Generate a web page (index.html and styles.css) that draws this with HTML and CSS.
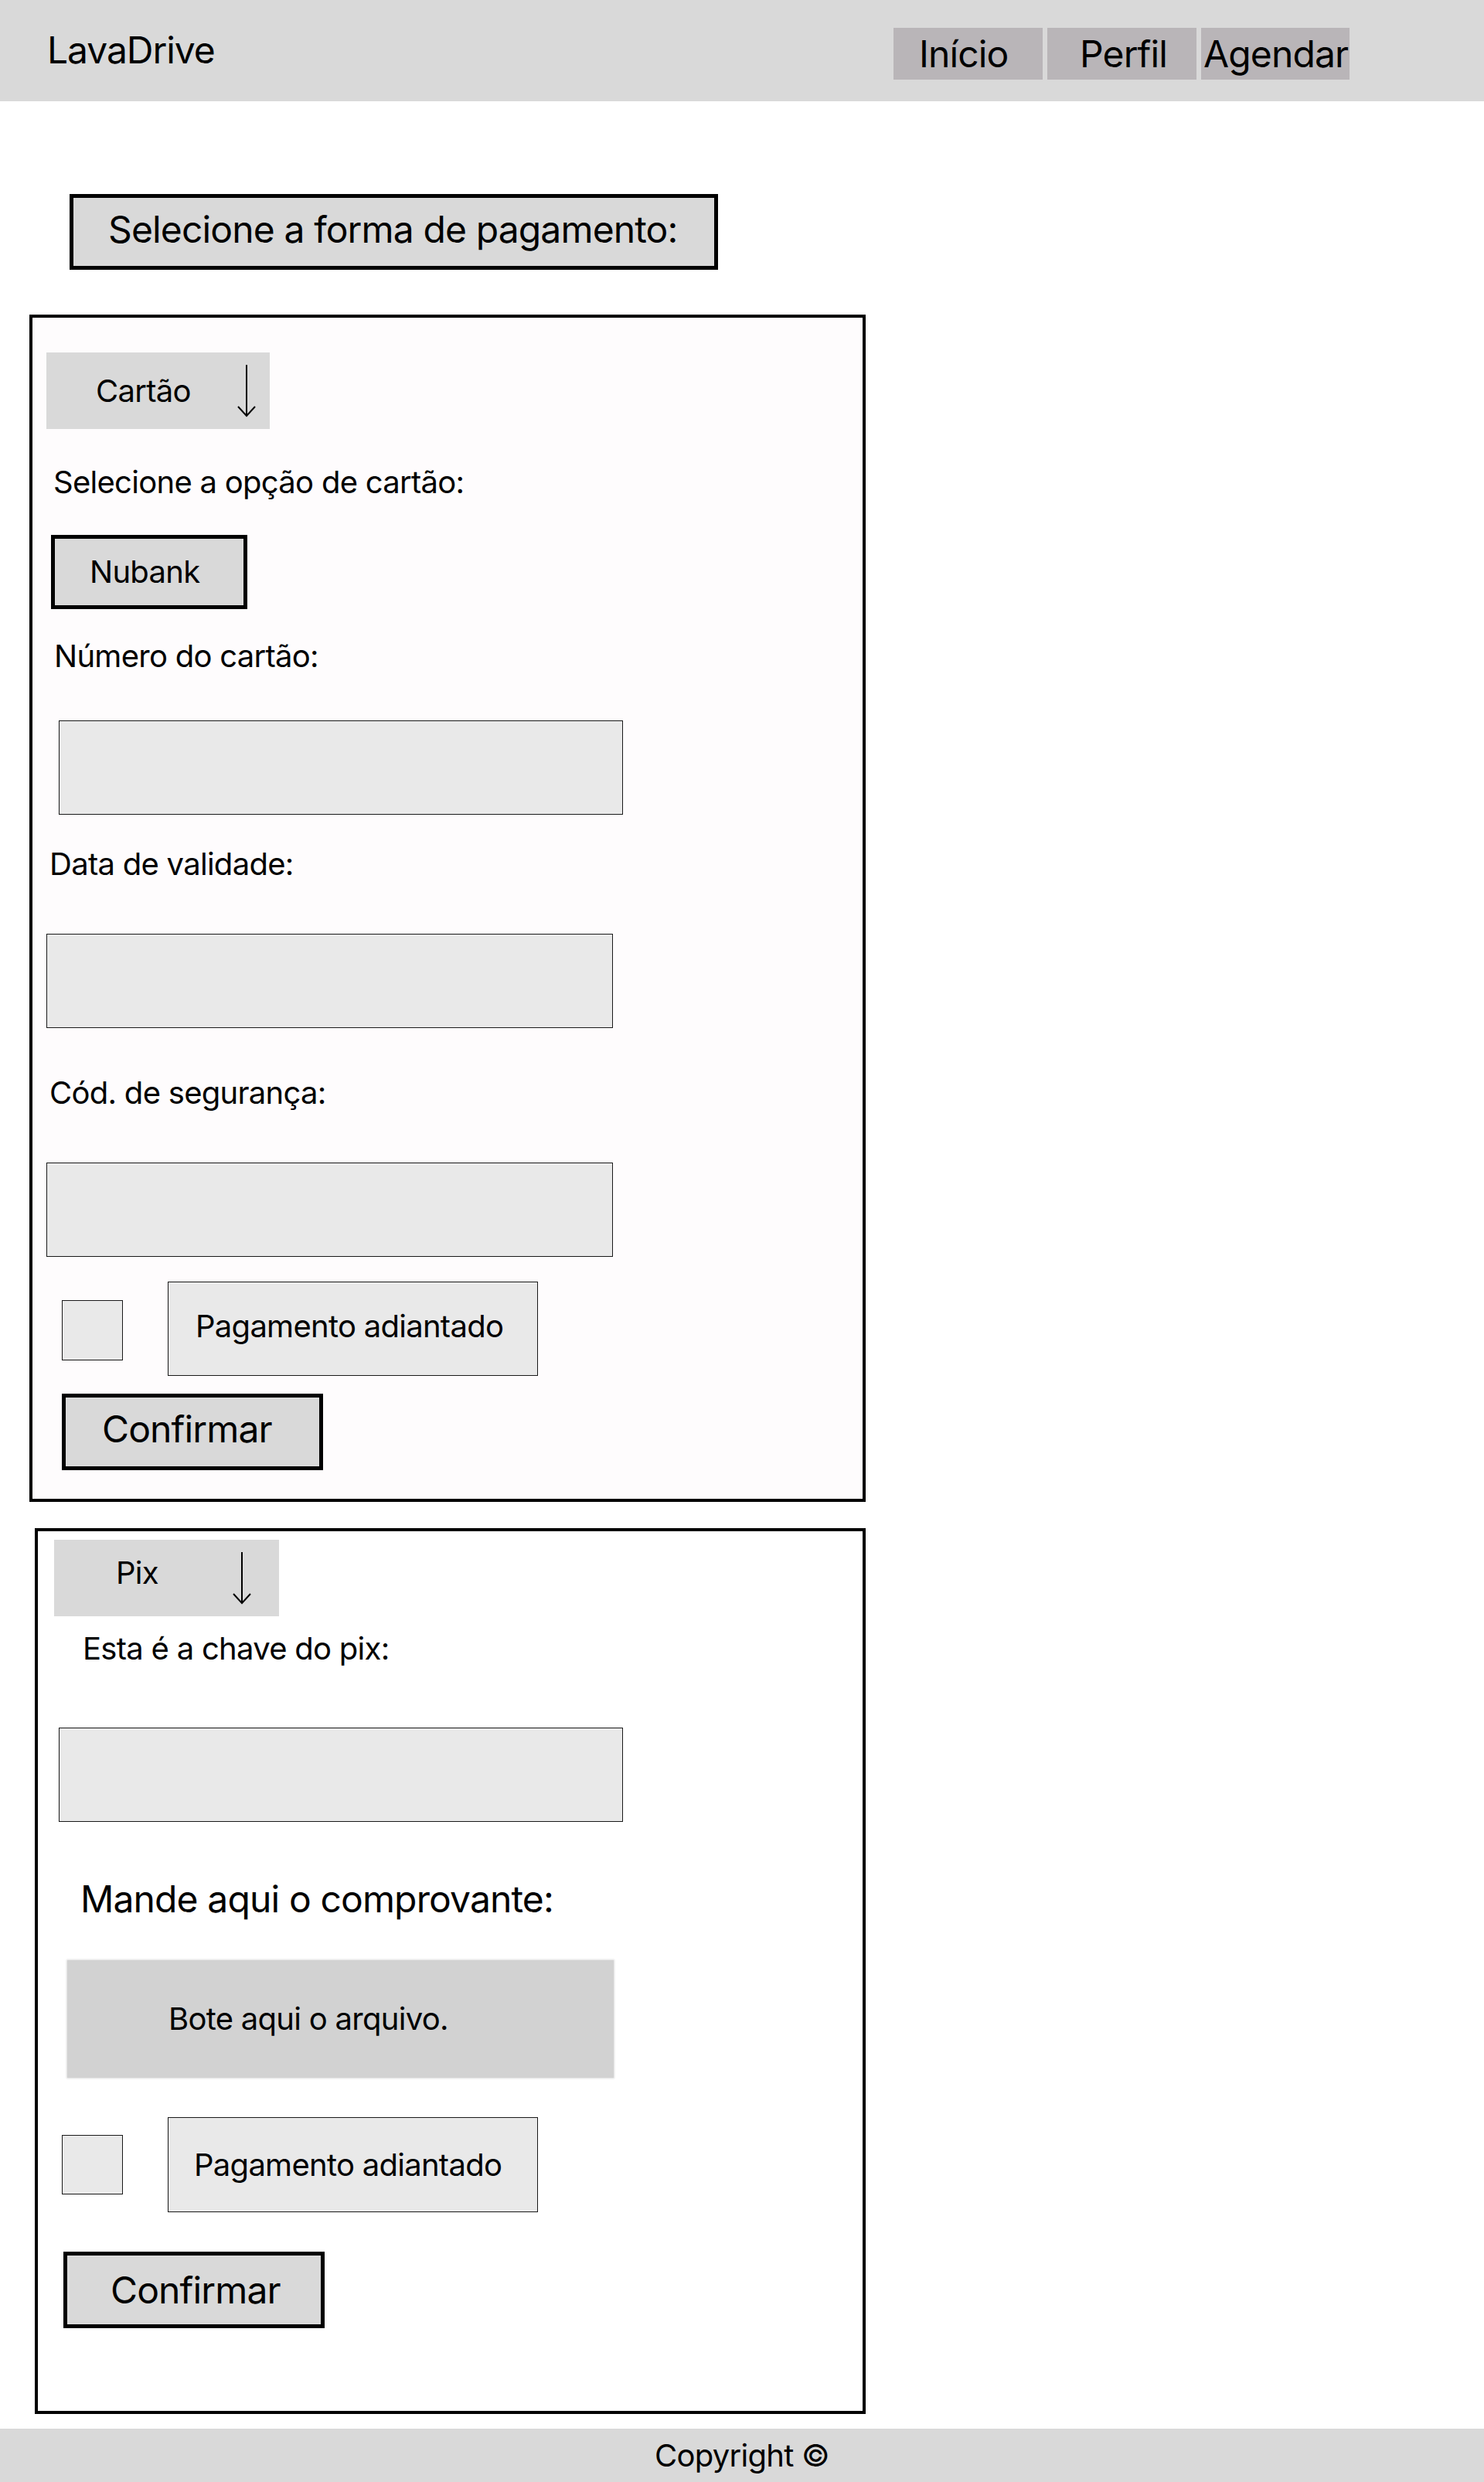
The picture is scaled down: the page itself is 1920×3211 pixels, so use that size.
FILE: index.html
```html
<!DOCTYPE html>
<html lang="pt-BR">
<head>
<meta charset="utf-8">
<title>LavaDrive - Pagamento</title>
<link rel="stylesheet" href="styles.css">
</head>
<body>
<header class="topbar">
  <div class="logo">LavaDrive</div>
  <nav class="nav">
    <a class="nav-item nav-inicio">Início</a>
    <a class="nav-item nav-perfil">Perfil</a>
    <a class="nav-item nav-agendar">Agendar</a>
  </nav>
</header>

<main class="main">
  <div class="title-box">Selecione a forma de pagamento:</div>

  <section class="card card-cartao">
    <div class="dropdown dropdown-cartao">
      <span>Cartão</span>
      <svg class="arrow" width="24" height="68" viewBox="0 0 24 68"><path d="M12 0 V66 M1 54 L12 66 L23 54" fill="none" stroke="#000" stroke-width="2"/></svg>
    </div>
    <div class="label c1-l1">Selecione a opção de cartão:</div>
    <div class="bank-btn">Nubank</div>
    <div class="label c1-l2">Número do cartão:</div>
    <div class="field c1-f1"></div>
    <div class="label c1-l3">Data de validade:</div>
    <div class="field c1-f2"></div>
    <div class="label c1-l4">Cód. de segurança:</div>
    <div class="field c1-f3"></div>
    <div class="check-row c1-row">
      <div class="checkbox c1-check"></div>
      <div class="advance">Pagamento adiantado</div>
    </div>
    <div class="confirm c1-confirm">Confirmar</div>
  </section>

  <section class="card card-pix">
    <div class="dropdown dropdown-pix">
      <span class="pix-text">Pix</span>
      <svg class="arrow" width="24" height="68" viewBox="0 0 24 68"><path d="M12 0 V66 M1 54 L12 66 L23 54" fill="none" stroke="#000" stroke-width="2"/></svg>
    </div>
    <div class="label c2-l1">Esta é a chave do pix:</div>
    <div class="field c2-f1"></div>
    <div class="label-lg c2-l2">Mande aqui o comprovante:</div>
    <div class="upload">Bote aqui o arquivo.</div>
    <div class="check-row c2-row">
      <div class="checkbox c2-check"></div>
      <div class="advance">Pagamento adiantado</div>
    </div>
    <div class="confirm c2-confirm">Confirmar</div>
  </section>
</main>

<footer class="footer">Copyright ©</footer>
</body>
</html>
```

FILE: styles.css
```css
* {
  box-sizing: border-box;
  letter-spacing: -0.018em;
}

html, body {
  margin: 0;
  padding: 0;
  background: #ffffff;
}

body {
  font-family: "Inter", "Liberation Sans", sans-serif;
  color: #000;
  width: 1920px;
}

/* Header */
.topbar {
  height: 131px;
  background: #d9d9d9;
  display: flex;
  align-items: flex-start;
}

.logo {
  font-size: 48px;
  line-height: 58px;
  margin-top: 36px;
  margin-left: 61px;
  letter-spacing: -0.022em;
}

.nav {
  display: flex;
  gap: 6px;
  margin-left: auto;
  margin-right: 174px;
  margin-top: 36px;
}

.nav-item {
  height: 67px;
  background: #b9b5b8;
  font-size: 48px;
  line-height: 58px;
  display: flex;
  align-items: center;
  white-space: nowrap;
}

.nav-inicio { width: 193px; padding-left: 33px; }
.nav-perfil { width: 193px; padding-left: 42px; }
.nav-agendar { width: 192px; padding-left: 3px; }

/* Main */
.main {
  display: flex;
  flex-direction: column;
  align-items: flex-start;
}

.title-box {
  margin-top: 120px;
  margin-left: 90px;
  width: 839px;
  height: 98px;
  border: 5px solid #000;
  background: #d9d9d9;
  font-size: 48px;
  line-height: 58px;
  padding-left: 45px;
  padding-bottom: 7px;
  display: flex;
  align-items: center;
}

.card {
  border: 4px solid #000;
  display: flex;
  flex-direction: column;
  align-items: flex-start;
}

.card-cartao {
  margin-top: 58px;
  margin-left: 38px;
  width: 1082px;
  background: #fefcfd;
  padding-bottom: 37px;
}

.card-pix {
  margin-top: 34px;
  margin-left: 45px;
  width: 1075px;
  background: #ffffff;
  padding-bottom: 107px;
}

.dropdown {
  height: 99px;
  background: #d9d9d9;
  display: flex;
  align-items: center;
  font-size: 40px;
  line-height: 48px;
}

.dropdown .arrow {
  margin-left: auto;
  display: block;
}

.dropdown-cartao {
  margin-top: 45px;
  margin-left: 18px;
  width: 289px;
  padding-left: 64px;
  padding-right: 18px;
}

.dropdown-pix {
  margin-top: 11px;
  margin-left: 21px;
  width: 291px;
  padding-left: 80px;
  padding-right: 36px;
}

.pix-text {
  margin-bottom: 14px;
}

.label {
  font-size: 40px;
  line-height: 48px;
  white-space: nowrap;
}

.label-lg {
  font-size: 48px;
  line-height: 58px;
  white-space: nowrap;
}

.c1-l1 { margin-top: 45px; margin-left: 27px; }
.c1-l2 { margin-top: 37px; margin-left: 28px; }
.c1-l3 { margin-top: 40px; margin-left: 22px; }
.c1-l4 { margin-top: 60px; margin-left: 22px; }

.bank-btn {
  margin-top: 44px;
  margin-left: 24px;
  width: 254px;
  height: 96px;
  border: 5px solid #000;
  background: #d9d9d9;
  font-size: 40px;
  line-height: 48px;
  padding-left: 45px;
  display: flex;
  align-items: center;
}

.field {
  height: 122px;
  border: 1px solid #1a1a1a;
  background: #e9e9e9;
}

.c1-f1 { margin-top: 59px; margin-left: 34px; width: 730px; }
.c1-f2 { margin-top: 66px; margin-left: 18px; width: 733px; }
.c1-f3 { margin-top: 66px; margin-left: 18px; width: 733px; }

.check-row {
  display: flex;
  align-items: flex-start;
}

.c1-row { margin-top: 32px; }
.c2-row { margin-top: 51px; }

.checkbox {
  width: 79px;
  height: 78px;
  border: 1px solid #1a1a1a;
  background: #e9e9e9;
}

.c1-check { margin-left: 38px; margin-top: 24px; }
.c2-check { margin-left: 31px; margin-top: 23px; height: 77px; }

.advance {
  margin-left: 58px;
  width: 479px;
  height: 122px;
  border: 1px solid #1a1a1a;
  background: #e9e9e9;
  font-size: 40px;
  line-height: 48px;
  padding-left: 35px;
  padding-bottom: 6px;
  display: flex;
  align-items: center;
  white-space: nowrap;
}

.c2-row .advance { height: 123px; padding-left: 33px; padding-bottom: 0; }

.confirm {
  width: 338px;
  height: 99px;
  border: 5px solid #000;
  background: #d9d9d9;
  font-size: 48px;
  line-height: 58px;
  display: flex;
  align-items: center;
}

.c1-confirm { margin-top: 23px; margin-left: 38px; padding-left: 47px; padding-bottom: 8px; }
.c2-confirm { margin-top: 51px; margin-left: 33px; padding-left: 56px; }

.c2-l1 { margin-top: 18px; margin-left: 58px; }
.c2-f1 { margin-top: 78px; margin-left: 27px; width: 730px; }
.c2-l2 { margin-top: 71px; margin-left: 55px; }

.upload {
  margin-top: 50px;
  margin-left: 38px;
  width: 707px;
  height: 152px;
  background: #d2d2d2;
  box-shadow: 0 0 2px 1px #dedede;
  font-size: 40px;
  line-height: 48px;
  padding-left: 131px;
  display: flex;
  align-items: center;
}

/* Footer */
.footer {
  margin-top: 19px;
  height: 69px;
  background: #d9d9d9;
  font-size: 40px;
  line-height: 48px;
  display: flex;
  align-items: center;
  justify-content: center;
}
```
